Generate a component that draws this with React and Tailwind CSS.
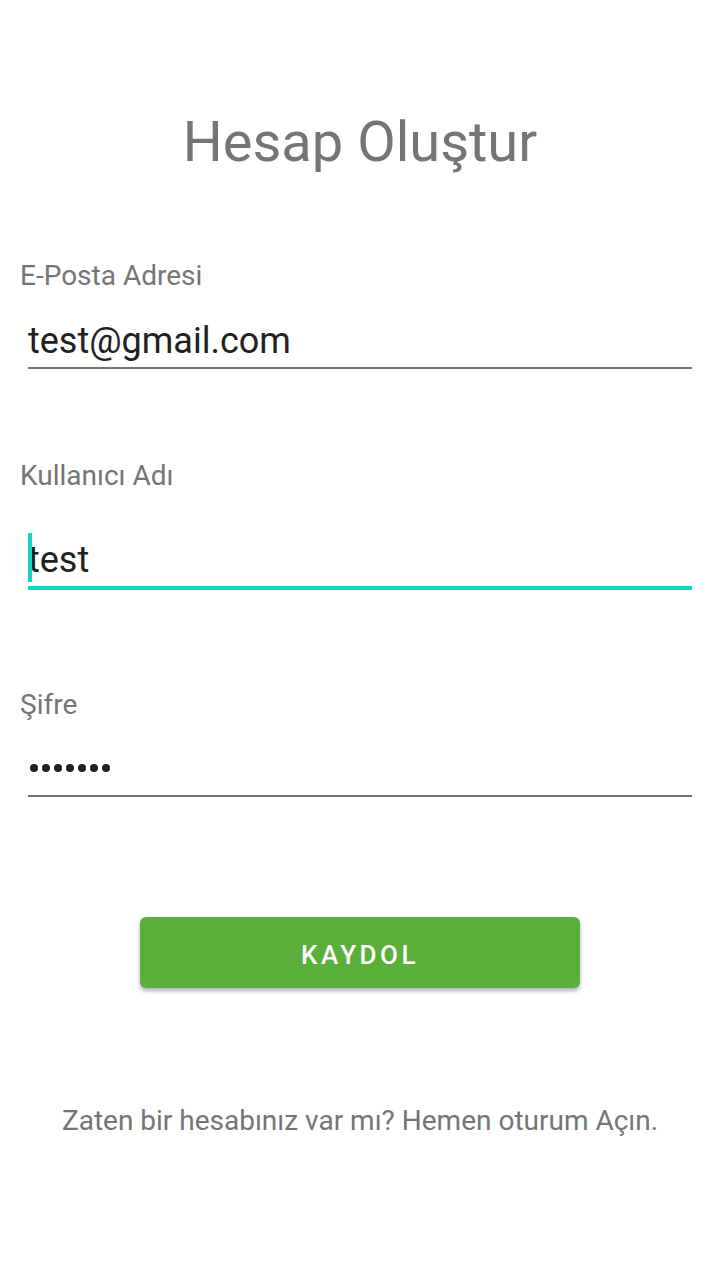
export default function App() {
    const font = { fontFamily: 'Roboto, "Noto Sans", sans-serif' };

    return (
        <div className="min-h-screen w-[720px] bg-white pt-[114px]" style={font}>
            <h1 className="h-[56px] text-center text-[56px] leading-none text-[#757575]">Hesap Oluştur</h1>

            {/* E-posta */}
            <div className="mt-[92px] ml-[20px] h-[28px] text-[28px] leading-none text-[#757575]">E-Posta Adresi</div>
            <div className="mt-[33px] ml-[28px] mr-[28px] border-b-2 border-[#757575] pb-[8px]">
                <div className="h-[36px] text-[36px] leading-none text-[#212121]">test@gmail.com</div>
            </div>

            {/* Kullanıcı adı */}
            <div className="mt-[93px] ml-[20px] h-[28px] text-[28px] leading-none text-[#757575]">Kullanıcı Adı</div>
            <div className="relative mt-[52px] ml-[28px] mr-[28px] border-b-4 border-[#0fd6c6] pb-[8px]">
                <div className="h-[36px] text-[36px] leading-none text-[#212121]">test</div>
                <span className="absolute left-0 top-[-9px] h-[49px] w-[4px] bg-[#0fd6c6]" />
            </div>

            {/* Şifre */}
            <div className="mt-[101px] ml-[20px] h-[28px] text-[28px] leading-none text-[#757575]">Şifre</div>
            <div className="mt-[45px] ml-[28px] mr-[28px] border-b-2 border-[#757575] pb-[23px]">
                <div className="flex gap-[4px] pl-[2px]">
                    {[0, 1, 2, 3, 4, 5, 6].map((i) => (
                        <span key={i} className="h-[8px] w-[8px] rounded-full bg-[#212121]" />
                    ))}
                </div>
            </div>

            <button className="mx-auto mt-[120px] flex h-[71px] w-[440px] items-center justify-center rounded-[6px] bg-[#5bb03b] pt-[5px] text-[26px] font-medium tracking-[3.5px] text-white shadow-[0_3px_4px_rgba(0,0,0,0.3)]">
                KAYDOL
            </button>

            <p className="mt-[119px] text-center text-[28px] leading-none text-[#757575]">
                Zaten bir hesabınız var mı? Hemen oturum Açın.
            </p>
        </div>
    );
}
